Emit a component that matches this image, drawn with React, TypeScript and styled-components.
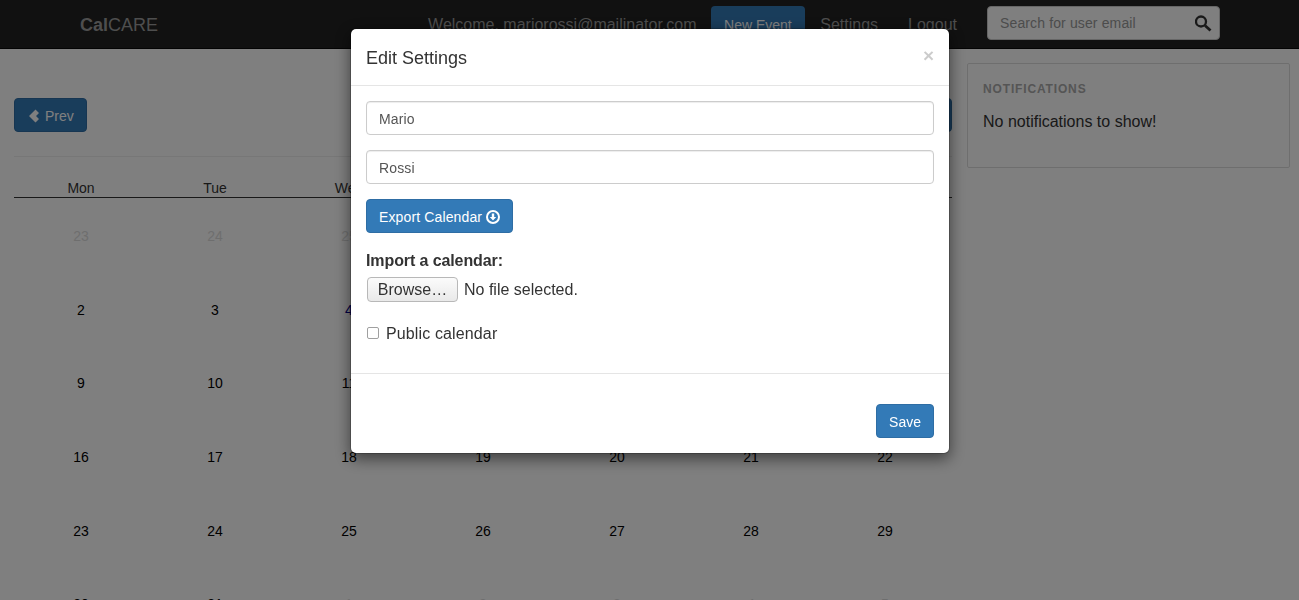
import styled, { createGlobalStyle } from "styled-components";

const GlobalStyle = createGlobalStyle`
	* {
		box-sizing: border-box;
	}
	html, body {
		margin: 0;
		height: 100%;
		overflow: hidden;
		background: #fff;
		font-family: "Liberation Sans", Arial, sans-serif;
		font-size: 14px;
		line-height: 20px;
		color: #333;
	}
`;

const Navbar = styled.nav`
	height: 49px;
	background: #222;
	border-bottom: 1px solid #080808;
	display: flex;
	align-items: flex-start;
	padding: 0 79px 0 80px;
`;

const Brand = styled.div`
	font-size: 18px;
	line-height: 50px;
	color: #9d9d9d;
	margin-right: auto;
	b {
		font-weight: 700;
	}
`;

const NavText = styled.span`
	line-height: 50px;
	font-size: 16px;
	color: #9d9d9d;
	margin-right: 14px;
`;

const NavButton = styled.span`
	height: 43px;
	margin-top: 6px;
	padding: 0 13.5px;
	font-size: 14px;
	line-height: 39px;
	color: #fff;
	background: #337ab7;
	border-radius: 4px 4px 0 0;
`;

const NavLink = styled.span`
	padding: 0 15px;
	font-size: 16px;
	line-height: 50px;
	color: #9d9d9d;
`;

const SearchBox = styled.div`
	width: 233px;
	height: 34px;
	margin: 6px 0 0 15px;
	background: #fff;
	border: 1px solid #ccc;
	border-radius: 4px;
	display: flex;
	align-items: center;
	justify-content: space-between;
	padding: 0 7px 0 12px;
	color: #999;
	letter-spacing: 0.13px;
`;

const Content = styled.div`
	display: flex;
	gap: 15px;
	padding: 14px 9px 0 14px;
`;

const CalendarColumn = styled.main`
	width: 938px;
	flex: none;
`;

const CalendarHead = styled.div`
	display: flex;
	justify-content: space-between;
	margin-top: 35px;
	padding-bottom: 24px;
	border-bottom: 1px solid #eee;
`;

const Button = styled.button`
	height: 34px;
	padding: 2px 12px 0;
	font: inherit;
	color: #fff;
	background: #337ab7;
	border: 1px solid #2e6da4;
	border-radius: 4px;
	display: inline-flex;
	align-items: center;
	gap: 4px;
`;

const Days = styled.div`
	display: grid;
	grid-template-columns: repeat(7, 134px);
	margin-top: 21px;
	border-bottom: 1px solid #333;
	height: 20px;
	span {
		text-align: center;
		line-height: 21px;
		color: #333;
	}
`;

const Dates = styled.div`
	display: grid;
	grid-template-columns: repeat(7, 134px);
	grid-auto-rows: 73.7px;
	padding-top: 2px;
`;

const DateCell = styled.div<{ $muted?: boolean; $today?: boolean }>`
	text-align: center;
	padding-top: 26px;
	color: ${(p) => (p.$muted ? "#ddd" : p.$today ? "#00008b" : "#000")};
`;

const Sidebar = styled.aside`
	width: 323px;
	height: 105px;
	border: 1px solid #ddd;
	border-radius: 2px;
	padding: 17px 15px;
`;

const SidebarTitle = styled.h4`
	margin: 0 0 12px;
	font-size: 12px;
	line-height: 17px;
	font-weight: 700;
	letter-spacing: 0.85px;
	color: #aaa;
`;

const SidebarText = styled.p`
	margin: 0;
	font-size: 16px;
	line-height: 23px;
	color: #333;
`;

const Backdrop = styled.div`
	position: fixed;
	inset: 0;
	background: rgba(0, 0, 0, 0.5);
`;

const Modal = styled.div`
	position: fixed;
	top: 28px;
	left: 350px;
	width: 600px;
	height: 426px;
	background: #fff;
	border: 1px solid rgba(0, 0, 0, 0.2);
	background-clip: padding-box;
	border-radius: 6px;
	box-shadow: 0 5px 15px rgba(0, 0, 0, 0.5);
`;

const ModalHeader = styled.header`
	height: 57px;
	padding: 16px 15px 14px;
	border-bottom: 1px solid #e5e5e5;
	display: flex;
	justify-content: space-between;
`;

const ModalTitle = styled.h4`
	margin: 0;
	font-size: 18px;
	font-weight: 500;
	line-height: 26px;
	color: #333;
`;

const Close = styled.span`
	font-size: 19px;
	font-weight: 700;
	line-height: 22px;
	color: #000;
	opacity: 0.2;
`;

const ModalBody = styled.div`
	height: 288px;
	padding: 15px;
	border-bottom: 1px solid #e5e5e5;
`;

const TextInput = styled.input`
	display: block;
	width: 100%;
	height: 34px;
	margin-bottom: 15px;
	padding: 7px 12px 5px;
	font: inherit;
	letter-spacing: 0.13px;
	color: #555;
	border: 1px solid #ccc;
	border-radius: 4px;
	box-shadow: inset 0 1px 1px rgba(0, 0, 0, 0.075);
`;

const ExportButton = styled(Button)`
	letter-spacing: 0.13px;
`;

const ImportLabel = styled.div`
	margin-top: 16px;
	font-size: 16px;
	line-height: 23px;
	font-weight: 700;
	letter-spacing: -0.1px;
`;

const FileRow = styled.div`
	display: flex;
	align-items: center;
	gap: 6px;
	margin-top: 5px;
	font-size: 16px;
	color: #333;
`;

const Browse = styled.button`
	width: 91px;
	height: 25px;
	margin-left: 1px;
	padding: 0;
	font: inherit;
	color: #333;
	background: linear-gradient(#fbfbfb, #e9e9e9);
	border: 1px solid #b8b8b8;
	border-radius: 4px;
`;

const CheckRow = styled.label`
	display: flex;
	align-items: center;
	gap: 7px;
	margin-top: 20px;
	font-size: 16px;
	line-height: 23px;
	letter-spacing: 0.13px;
	color: #333;
`;

const Check = styled.input`
	appearance: none;
	width: 12px;
	height: 12px;
	margin: 0 0 2px 1px;
	background: #fff;
	border: 1px solid #a0a0a0;
	border-radius: 2px;
`;

const ModalFooter = styled.footer`
	display: flex;
	justify-content: flex-end;
	padding: 30px 15px 15px;
`;

const Glyph = styled.svg`
	flex: none;
	display: block;
`;

const ChevronLeft = () => (
	<Glyph width="14" height="14" viewBox="0 0 14 14">
		<path d="M2 7 8.5.5 12 4 9 7l3 3-3.5 3.5Z" fill="currentColor" />
	</Glyph>
);

const ChevronRight = () => (
	<Glyph width="14" height="14" viewBox="0 0 14 14">
		<path d="M12 7 5.5.5 2 4l3 3-3 3 3.5 3.5Z" fill="currentColor" />
	</Glyph>
);

const SearchIcon = () => (
	<Glyph width="17" height="17" viewBox="0 0 17 17">
		<circle cx="6" cy="6.5" r="5" fill="none" stroke="#333" strokeWidth="2.3" />
		<path d="M10 10.5 15.5 15.5" stroke="#333" strokeWidth="2.8" />
	</Glyph>
);

const ArrowCircleDown = () => (
	<Glyph width="14" height="14" viewBox="0 0 14 14">
		<circle cx="7" cy="7" r="6" fill="none" stroke="currentColor" strokeWidth="2" />
		<path d="M5.8 3.5h2.4V7H10.2L7 10.4 3.8 7H5.8Z" fill="currentColor" />
	</Glyph>
);

const rows = [
	[23, 24, 25, 26, 27, 28, 29],
	[2, 3, 4, 5, 6, 7, 8],
	[9, 10, 11, 12, 13, 14, 15],
	[16, 17, 18, 19, 20, 21, 22],
	[23, 24, 25, 26, 27, 28, 29],
	[30, 31, 1, 2, 3, 4, 5],
];

const App = () => {
	return (
		<>
			<GlobalStyle />
			<Navbar>
				<Brand>
					<b>Cal</b>CARE
				</Brand>
				<NavText>Welcome, mariorossi@mailinator.com</NavText>
				<NavButton>New Event</NavButton>
				<NavLink>Settings</NavLink>
				<NavLink>Logout</NavLink>
				<SearchBox>
					Search for user email
					<SearchIcon />
				</SearchBox>
			</Navbar>
			<Content>
				<CalendarColumn>
					<CalendarHead>
						<Button>
							<ChevronLeft /> Prev
						</Button>
						<Button>
							Next <ChevronRight />
						</Button>
					</CalendarHead>
					<Days>
						{["Mon", "Tue", "Wed", "Thu", "Fri", "Sat", "Sun"].map((d) => (
							<span key={d}>{d}</span>
						))}
					</Days>
					<Dates>
						{rows.map((row, r) =>
							row.map((d, c) => (
								<DateCell
									key={`${r}-${c}`}
									$muted={r === 0 || (r === 5 && c > 1)}
									$today={r === 1 && c === 2}
								>
									{d}
								</DateCell>
							)),
						)}
					</Dates>
				</CalendarColumn>
				<Sidebar>
					<SidebarTitle>NOTIFICATIONS</SidebarTitle>
					<SidebarText>No notifications to show!</SidebarText>
				</Sidebar>
			</Content>
			<Backdrop />
			<Modal>
				<ModalHeader>
					<ModalTitle>Edit Settings</ModalTitle>
					<Close>×</Close>
				</ModalHeader>
				<ModalBody>
					<TextInput defaultValue="Mario" />
					<TextInput defaultValue="Rossi" />
					<ExportButton>
						Export Calendar <ArrowCircleDown />
					</ExportButton>
					<ImportLabel>Import a calendar:</ImportLabel>
					<FileRow>
						<Browse>Browse…</Browse>
						No file selected.
					</FileRow>
					<CheckRow>
						<Check type="checkbox" />
						Public calendar
					</CheckRow>
				</ModalBody>
				<ModalFooter>
					<Button>Save</Button>
				</ModalFooter>
			</Modal>
		</>
	);
};

export default App;
